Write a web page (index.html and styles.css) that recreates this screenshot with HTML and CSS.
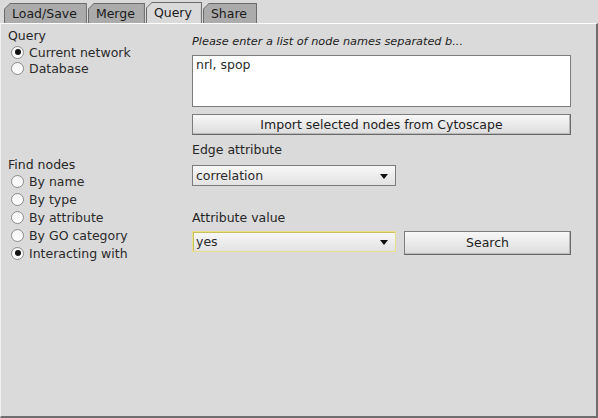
FILE: index.html
```html
<!DOCTYPE html>
<html>
<head>
<meta charset="utf-8">
<link rel="stylesheet" href="styles.css">
</head>
<body>
<div class="window">
  <div class="tabs">
    <div class="tab"><div class="tab-in">Load/Save</div></div>
    <div class="tab"><div class="tab-in">Merge</div></div>
    <div class="tab sel"><div class="tab-in">Query</div></div>
    <div class="tab"><div class="tab-in">Share</div></div>
  </div>
  <div class="panel">
    <div class="left">
      <div class="label">Query</div>
      <div class="radios tight">
        <div class="radio"><span class="dot on"></span>Current network</div>
        <div class="radio"><span class="dot"></span>Database</div>
      </div>
      <div class="label find">Find nodes</div>
      <div class="radios lower">
        <div class="radio"><span class="dot"></span>By name</div>
        <div class="radio"><span class="dot"></span>By type</div>
        <div class="radio"><span class="dot"></span>By attribute</div>
        <div class="radio"><span class="dot"></span>By GO category</div>
        <div class="radio"><span class="dot on"></span>Interacting with</div>
      </div>
    </div>
    <div class="right">
      <div class="hint">Please enter a list of node names separated b...</div>
      <div class="textarea">nrl, spop</div>
      <div class="button wide">Import selected nodes from Cytoscape</div>
      <div class="label fl">Edge attribute</div>
      <div class="combo"><span>correlation</span><span class="arrow"></span></div>
      <div class="label fl2">Attribute value</div>
      <div class="row">
        <div class="combo focus"><span>yes</span><span class="arrow"></span></div>
        <div class="button search">Search</div>
      </div>
    </div>
  </div>
</div>
</body>
</html>
```
FILE: styles.css
```css
html, body {
  margin: 0;
  padding: 0;
  background: #dadada;
}
body {
  width: 598px;
  height: 418px;
  overflow: hidden;
  font-family: "DejaVu Sans", "Liberation Sans", sans-serif;
  font-size: 12.5px;
  color: #2a2a2a;
}
.window {
  display: flex;
  flex-direction: column;
  height: 418px;
}
.tabs {
  display: flex;
  align-items: flex-end;
  height: 23px;
  padding-left: 4px;
  gap: 1px;
}
.tab {
  height: 19px;
  padding: 1px 1px 0 1px;
  background: #6b6b6b;
  clip-path: polygon(0 6px, 6px 0, 100% 0, 100% 100%, 0 100%);
}
.tab-in {
  height: 19px;
  background: #ababab;
  clip-path: polygon(0 5px, 5px 0, 100% 0, 100% 100%, 0 100%);
  padding: 0 9px 0 7px;
  line-height: 19px;
  color: #1a1a1a;
}
.tab.sel {
  height: 20px;
}
.tab.sel .tab-in {
  height: 21px;
  background: #dadada;
  line-height: 19px;
}
.panel {
  flex: 1;
  display: flex;
  border-top: 1px solid #ffffff;
  border-left: 1px solid #f0f0f0;
  border-right: 2px solid #6e6e6e;
  border-bottom: 2px solid #6e6e6e;
  padding: 4px 0 0 7px;
}
.left {
  width: 184px;
  display: flex;
  flex-direction: column;
}
.label {
  line-height: 15px;
  color: #262626;
}
.radios {
  display: flex;
  flex-direction: column;
  padding-left: 3px;
}
.radios.tight .radio {
  height: 16px;
}
.radio {
  height: 18px;
  display: flex;
  align-items: center;
  gap: 5px;
}
.tight {
  margin-top: 1px;
}
.lower {
  margin-top: 0;
}
.dot {
  width: 11px;
  height: 11px;
  border: 1px solid #8c8c8c;
  border-radius: 50%;
  background: linear-gradient(#f4f4f4, #ffffff);
  display: inline-flex;
  align-items: center;
  justify-content: center;
  box-sizing: content-box;
}
.dot.on::after {
  content: "";
  width: 6px;
  height: 6px;
  border-radius: 50%;
  background: #111;
}
.find {
  margin-top: 81px;
}
.right {
  width: 379px;
  display: flex;
  flex-direction: column;
}
.hint {
  font-style: italic;
  font-size: 11.3px;
  line-height: 15px;
  margin-top: 6px;
  color: #222;
}
.textarea {
  margin-top: 6px;
  background: #fff;
  border: 1px solid #7c7c7c;
  padding: 2px 3px;
  box-sizing: border-box;
  height: 52px;
  line-height: 14px;
}
.button {
  border: 1px solid #7c7c7c;
  border-right-color: #6a6a6a;
  border-bottom-color: #6a6a6a;
  background: linear-gradient(#f8f8f8, #dcdcdc);
  box-shadow: inset -1px -1px 0 #b8b8b8;
  text-align: center;
  box-sizing: border-box;
  color: #222;
}
.wide {
  margin-top: 7px;
  height: 21px;
  line-height: 19px;
}
.fl {
  margin-top: 7px;
}
.combo {
  margin-top: 8px;
  width: 204px;
  height: 21px;
  box-sizing: border-box;
  border: 1px solid #7c7c7c;
  background: linear-gradient(#f8f8f8, #e2e2e2);
  display: flex;
  align-items: center;
  justify-content: space-between;
  padding: 0 7px 0 3px;
}
.arrow {
  width: 0;
  height: 0;
  border-left: 4px solid transparent;
  border-right: 4px solid transparent;
  border-top: 5px solid #111;
  margin-top: 2px;
}
.fl2 {
  margin-top: 24px;
}
.row {
  display: flex;
  align-items: flex-start;
  gap: 8px;
  margin-top: 6px;
}
.row .combo {
  margin-top: 0;
}
.combo.focus {
  border-color: #e8df8a;
  box-shadow: inset 1px 1px 0 #c9c060;
}
.search {
  width: 167px;
  height: 24px;
  line-height: 22px;
}
```
